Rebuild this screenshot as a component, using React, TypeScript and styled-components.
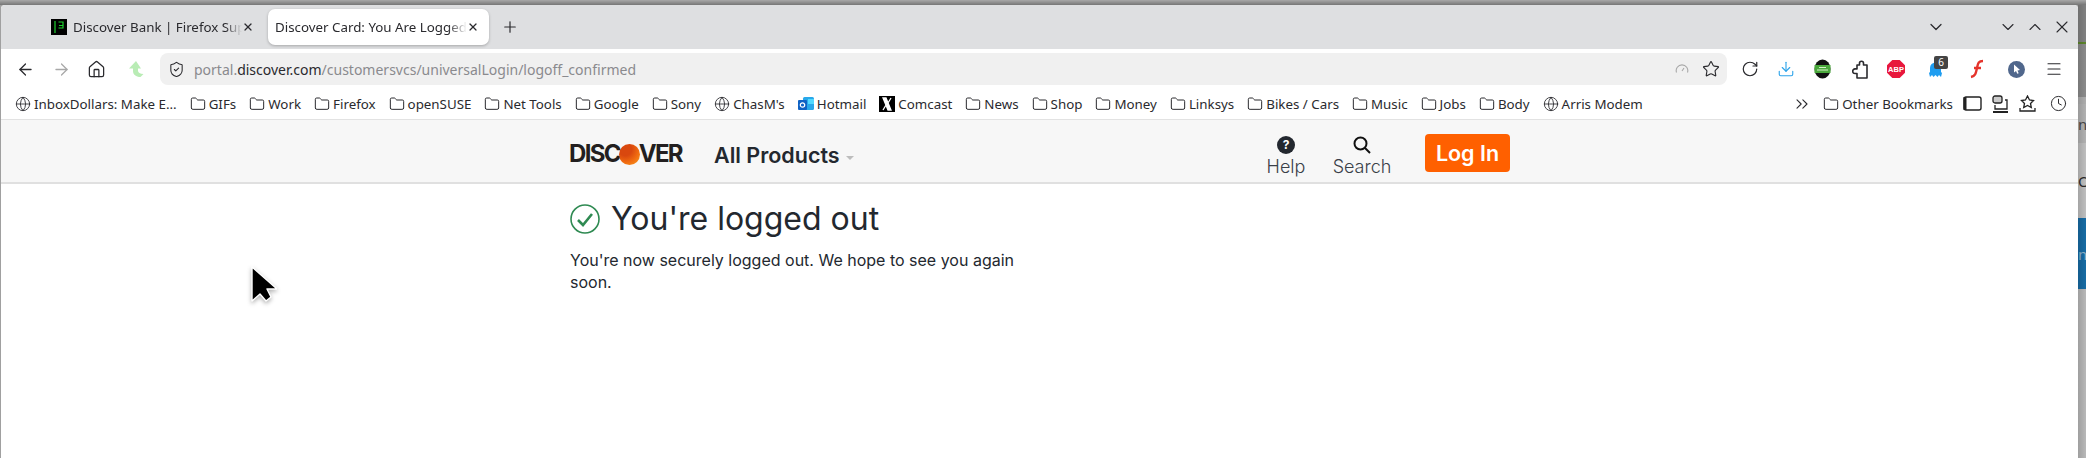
import React from 'react';
import styled, { createGlobalStyle } from 'styled-components';
import {
  ArrowLeft,
  ArrowRight,
  ChevronDown,
  ChevronUp,
  ChevronsRight,
  Clock,
  Download,
  Folder,
  Globe,
  Home,
  Menu,
  Plus,
  RotateCw,
  ShieldCheck,
  Star,
  X,
} from 'lucide-react';

const GlobalStyle = createGlobalStyle`
  html, body {
    margin: 0;
    width: 2086px;
    height: 458px;
    overflow: hidden;
    background: #a0a0a0;
    font-family: 'Noto Sans', sans-serif;
  }
`;

const Screen = styled.div`
  position: relative;
  width: 2086px;
  height: 458px;
  display: flex;
  flex-direction: column;
  overflow: hidden;
`;

const DesktopTop = styled.div`
  height: 5px;
  flex: none;
  background: linear-gradient(#a8a8a8, #767676);
`;

const Desktop = styled.div`
  flex: 1;
  display: flex;
  min-height: 0;
`;

const BrowserWindow = styled.div`
  width: 2077px;
  margin-left: 1px;
  flex: none;
  display: flex;
  flex-direction: column;
  background: #fff;
  border-top-left-radius: 4px;
  border-top-right-radius: 4px;
  overflow: hidden;
`;

const BehindStrip = styled.div`
  position: relative;
  flex: 1;
  display: flex;
  flex-direction: column;
  background: #dcdcdc;
  &::after {
    content: '';
    position: absolute;
    inset: 0;
    background: linear-gradient(to right, rgba(0, 0, 0, 0.28), rgba(0, 0, 0, 0));
  }
`;

const StripBlock = styled.div<{ $h: number; $bg: string; $color?: string }>`
  height: ${({ $h }) => $h}px;
  flex: none;
  overflow: hidden;
  display: flex;
  align-items: center;
  white-space: nowrap;
  font-size: 15px;
  color: ${({ $color }) => $color ?? '#555'};
  background: ${({ $bg }) => $bg};
`;

const TabBar = styled.div`
  height: 44px;
  flex: none;
  display: flex;
  align-items: center;
  background: #dedfe1;
  color: #2a2a2e;
  padding-left: 43px;
`;

const Tab = styled.div<{ $active?: boolean }>`
  height: 36px;
  box-sizing: border-box;
  display: flex;
  align-items: center;
  border-radius: 7px;
  padding: 0 6px 0 7px;
  background: ${({ $active }) => ($active ? '#fff' : 'transparent')};
  box-shadow: ${({ $active }) => ($active ? '0 1px 3px rgba(0,0,0,.25)' : 'none')};
  width: ${({ $active }) => ($active ? '221px' : '222px')};
  margin-right: ${({ $active }) => ($active ? '0' : '2px')};
`;

const TabTitle = styled.span<{ $w: number }>`
  width: ${({ $w }) => $w}px;
  flex: none;
  overflow: hidden;
  white-space: nowrap;
  font-size: 13.33px;
  -webkit-mask-image: linear-gradient(to right, #000 90%, transparent);
  mask-image: linear-gradient(to right, #000 90%, transparent);
`;

const Favicon = styled.svg`
  width: 16px;
  height: 16px;
  flex: none;
  margin-right: 6px;
`;

const TabClose = styled(X)`
  width: 12px;
  height: 12px;
  flex: none;
`;

const NewTab = styled.div`
  width: 42px;
  display: flex;
  justify-content: center;
  align-items: center;
`;

const TabBarSpacer = styled.div`
  flex: 1;
`;

const WindowButton = styled.div<{ $w: number }>`
  width: ${({ $w }) => $w}px;
  display: flex;
  justify-content: center;
  align-items: center;
`;

const Toolbar = styled.div`
  height: 32px;
  padding: 4px 0 0 6px;
  flex: none;
  display: flex;
  align-items: center;
  background: #fff;
  color: #2a2a2e;
`;

const ToolButton = styled.div<{ $w: number }>`
  position: relative;
  width: ${({ $w }) => $w}px;
  height: 32px;
  flex: none;
  display: flex;
  align-items: center;
  justify-content: center;
`;

const UrlBar = styled.div`
  width: 1567px;
  height: 32px;
  flex: none;
  display: flex;
  align-items: center;
  box-sizing: border-box;
  border-radius: 8px;
  background: #f0f0f0;
  padding: 0 1px 0 8px;
  margin-right: 5px;
`;

const UrlText = styled.div`
  flex: 1;
  margin-left: 9px;
  font-size: 14px;
  color: #8a8a8e;
  white-space: nowrap;
`;

const UrlDomain = styled.span`
  color: #2a2a2e;
`;

const ZoomGauge = styled.svg`
  margin-right: 7px;
`;

const Badge = styled.span`
  position: absolute;
  top: 3px;
  left: 22px;
  width: 14px;
  height: 13px;
  background: #444;
  border-radius: 2px;
  color: #fff;
  font-size: 10px;
  line-height: 13px;
  text-align: center;
`;

const BookmarksBar = styled.div`
  height: 35px;
  flex: none;
  display: flex;
  align-items: center;
  box-sizing: border-box;
  border-bottom: 1px solid #e2e2e2;
  padding: 3px 0 0 14px;
  font-size: 13.33px;
  color: #2a2a2e;
`;

const Bookmark = styled.div<{ $ml?: number; $mr?: number }>`
  display: flex;
  align-items: center;
  gap: 3px;
  margin-left: ${({ $ml }) => $ml ?? 0}px;
  margin-right: ${({ $mr }) => $mr ?? 13}px;
  white-space: nowrap;
`;

const BookmarkIcon = styled.span`
  width: 16px;
  height: 16px;
  flex: none;
  display: flex;
  align-items: center;
  justify-content: center;
`;

const SidePanelIcons = styled.div`
  display: flex;
  align-items: center;
  gap: 10px;
  padding-right: 11px;
`;

const HistoryIcon = styled(Clock)`
  margin-left: 4px;
`;

const BookmarkSpacer = styled.div`
  flex: 1;
`;

const SiteHeader = styled.header`
  height: 64px;
  flex: none;
  box-sizing: border-box;
  display: flex;
  align-items: center;
  background: #f7f7f7;
  border-bottom: 2px solid #e0e0e0;
  padding: 4px 0 0 568px;
  color: #23282f;
  font-family: Inter, sans-serif;
`;

const Logo = styled.div`
  width: 114px;
  margin-top: 2px;
  display: flex;
  align-items: center;
  font-family: Inter, sans-serif;
  font-weight: 700;
  font-size: 24px;
  letter-spacing: -1.7px;
  color: #231f20;
  line-height: 1;
`;

const LogoDot = styled.span`
  width: 21px;
  height: 21px;
  border-radius: 50%;
  margin: 0 -1px 0 -1px;
  flex: none;
  background: radial-gradient(circle at 30% 25%, #d9480f 30%, #f06a10 60%, #f9a021 100%);
`;

const AllProducts = styled.div`
  margin: 3px 0 0 31px;
  width: 543px;
  display: flex;
  align-items: center;
  font-size: 21.5px;
  font-weight: 600;
`;

const Caret = styled.span`
  width: 0;
  height: 0;
  margin: 6px 0 0 6px;
  border-left: 4px solid transparent;
  border-right: 4px solid transparent;
  border-top: 4px solid #bdbdbd;
`;

const HeaderLink = styled.div<{ $w: number }>`
  width: ${({ $w }) => $w}px;
  align-self: flex-start;
  padding-top: 12px;
  display: flex;
  flex-direction: column;
  align-items: center;
  gap: 2px;
  font-size: 18px;
  font-weight: 300;
  color: #3a4048;
  line-height: 22px;
`;

const LogInButton = styled.div`
  width: 85px;
  height: 38px;
  margin-left: 16px;
  border-radius: 4px;
  background: #ff6000;
  color: #fff;
  font-size: 21.5px;
  font-weight: 600;
  line-height: 38px;
  text-align: center;
`;

const Content = styled.main`
  flex: 1;
  padding: 20px 0 0 569px;
  font-family: Inter, sans-serif;
  color: #23282f;
  background: #fff;
`;

const Heading = styled.h1`
  margin: 0;
  display: flex;
  align-items: center;
  gap: 11px;
  font-size: 32px;
  font-weight: 400;
  line-height: 30px;
`;

const Paragraph = styled.p`
  margin: 15px 0 0;
  width: 450px;
  font-size: 16px;
  line-height: 22px;
`;

const Pointer = styled.svg`
  position: absolute;
  left: 247px;
  top: 262px;
  filter: drop-shadow(0 2px 2px rgba(0, 0, 0, 0.3));
`;

const lucideProps = { size: 19, strokeWidth: 1.6 };
const folder = <Folder size={16} strokeWidth={1.5} />;
const globe = <Globe size={16} strokeWidth={1.3} />;

const leftBookmarks: { icon: React.ReactNode; label: string }[] = [
  { icon: globe, label: 'InboxDollars: Make E...' },
  { icon: folder, label: 'GIFs' },
  { icon: folder, label: 'Work' },
  { icon: folder, label: 'Firefox' },
  { icon: folder, label: 'openSUSE' },
  { icon: folder, label: 'Net Tools' },
  { icon: folder, label: 'Google' },
  { icon: folder, label: 'Sony' },
  { icon: globe, label: "ChasM's" },
  {
    icon: (
      <svg width="16" height="16" viewBox="0 0 16 16">
        <rect x="5" y="1" width="11" height="13" rx="1.5" fill="#28a8ea" />
        <rect x="10" y="3" width="6" height="5" fill="#50d9ff" />
        <rect x="0" y="4" width="9" height="10" rx="1" fill="#0f62c4" />
        <circle cx="4.5" cy="9" r="2.2" fill="none" stroke="#fff" strokeWidth="1.2" />
      </svg>
    ),
    label: 'Hotmail',
  },
  {
    icon: (
      <svg width="16" height="16" viewBox="0 0 16 16">
        <rect width="16" height="16" fill="#000" />
        <path d="M4 2h3l5 12H9zM12 2 9 7M4 14l3-5" stroke="#fff" strokeWidth="1.3" fill="#fff" />
      </svg>
    ),
    label: 'Comcast',
  },
  { icon: folder, label: 'News' },
  { icon: folder, label: 'Shop' },
  { icon: folder, label: 'Money' },
  { icon: folder, label: 'Linksys' },
  { icon: folder, label: 'Bikes / Cars' },
  { icon: folder, label: 'Music' },
  { icon: folder, label: 'Jobs' },
  { icon: folder, label: 'Body' },
  { icon: globe, label: 'Arris Modem' },
];

const App: React.FC = () => {
  return (
    <>
      <GlobalStyle />
      <Screen>
        <DesktopTop />
        <Desktop>
          <BrowserWindow>
            <TabBar>
              <Tab>
                <Favicon viewBox="0 0 16 16">
                  <rect width="16" height="16" fill="#000" />
                  <path d="M4 2v12M7.5 3h4.5v3.5H8M12 6.5V9H7.5" stroke="#1fd12f" strokeWidth="1.2" fill="none" />
                </Favicon>
                <TabTitle $w={169}>Discover Bank | Firefox Support</TabTitle>
                <TabClose strokeWidth={2.4} />
              </Tab>
              <Tab $active>
                <TabTitle $w={192}>Discover Card: You Are Logged Out</TabTitle>
                <TabClose strokeWidth={2.4} />
              </Tab>
              <NewTab>
                <Plus size={18} strokeWidth={1.6} />
              </NewTab>
              <TabBarSpacer />
              <WindowButton $w={32}>
                <ChevronDown size={20} strokeWidth={1.5} />
              </WindowButton>
              <WindowButton $w={42} />
              <WindowButton $w={27}>
                <ChevronDown size={20} strokeWidth={1.3} />
              </WindowButton>
              <WindowButton $w={27}>
                <ChevronUp size={20} strokeWidth={1.3} />
              </WindowButton>
              <WindowButton $w={27}>
                <X size={20} strokeWidth={1.3} />
              </WindowButton>
              <WindowButton $w={3} />
            </TabBar>
            <Toolbar>
              <ToolButton $w={36}>
                <ArrowLeft {...lucideProps} />
              </ToolButton>
              <ToolButton $w={36}>
                <ArrowRight {...lucideProps} color="#a8a8a8" />
              </ToolButton>
              <ToolButton $w={34}>
                <Home {...lucideProps} />
              </ToolButton>
              <ToolButton $w={47}>
                <svg width="18" height="18" viewBox="0 0 18 18">
                  <path d="M8 1 1 8.5h4V11c0 3.5 3 6 7.5 6l3-3c-3.5 0-5.5-1.5-5.5-3.5V8.500h3z" fill="#b9ecb5" />
                </svg>
              </ToolButton>
              <UrlBar>
                <ShieldCheck size={17} strokeWidth={1.5} color="#2a2a2e" />
                <UrlText>
                  portal.<UrlDomain>discover.com</UrlDomain>/customersvcs/universalLogin/logoff_confirmed
                </UrlText>
                <ZoomGauge width="14" height="10" viewBox="0 0 14 10" fill="none" stroke="#a8a8a8" strokeWidth="1.1">
                  <path d="M1.5 8.5a5.8 5.8 0 1 1 11 0M7 7l2-3" />
                </ZoomGauge>
                <ToolButton $w={30}>
                  <Star size={18} strokeWidth={1.5} />
                </ToolButton>
              </UrlBar>
              <ToolButton $w={36}>
                <RotateCw size={18} strokeWidth={1.6} />
              </ToolButton>
              <ToolButton $w={36}>
                <Download size={18} strokeWidth={1.5} color="#2ea4ea" />
              </ToolButton>
              <ToolButton $w={36}>
                <svg width="17" height="20" viewBox="0 0 17 20">
                  <ellipse cx="8.5" cy="10" rx="8" ry="9.5" fill="#111" />
                  <rect x="0.5" y="6" width="16" height="8" fill="#4aa83c" />
                  <path d="M3 11h11M5 8.5h7" stroke="#d5f0c8" strokeWidth="1.2" />
                </svg>
              </ToolButton>
              <ToolButton $w={40}>
                <svg width="16" height="20" viewBox="0 0 16 20" fill="#fff" stroke="#2a2a2e" strokeWidth="1.6" strokeLinejoin="round">
                  <path d="M5 6h2.5V4.200a2 2 0 0 1 4 0V6H15v13H5v-4.500H3a2.300 2.300 0 0 1 0-4.600h2z" />
                </svg>
              </ToolButton>
              <ToolButton $w={32}>
                <svg width="18" height="18" viewBox="0 0 18 18">
                  <path d="M5.3 0h7.4L18 5.3v7.4L12.7 18H5.3L0 12.7V5.3z" fill="#e8173c" />
                  <text x="9" y="12" fontSize="7.5" fontWeight="700" fill="#fff" textAnchor="middle" fontFamily="'Liberation Sans', sans-serif">ABP</text>
                </svg>
              </ToolButton>
              <ToolButton $w={46}>
                <svg width="13" height="17" viewBox="0 0 13 17">
                  <path d="M1 7a5.5 5.5 0 0 1 11 0v4l1 1-1 4-2-2-1.5 2-2-2-2 2L3 14l-2 2-1-4 1-1z" fill="#1f9df0" />
                </svg>
                <Badge>6</Badge>
              </ToolButton>
              <ToolButton $w={38}>
                <svg width="14" height="20" viewBox="0 0 14 20" fill="none" stroke="#e5342c" strokeWidth="2.4">
                  <path d="M13 2C8 2 8 5 7 9s-1 8-6 9M4 9h7" />
                </svg>
              </ToolButton>
              <ToolButton $w={40}>
                <svg width="17" height="17" viewBox="0 0 17 17">
                  <circle cx="8.5" cy="8.5" r="8.5" fill="#50678c" />
                  <path d="M6 3.5 12 9l-2.5.4 1.2 2.8-1.4.6L8 10l-2 1.6z" fill="#fff" />
                </svg>
              </ToolButton>
              <ToolButton $w={36}>
                <Menu size={18} strokeWidth={1.5} />
              </ToolButton>
            </Toolbar>
            <BookmarksBar>
              {leftBookmarks.map((b) => (
                <Bookmark key={b.label}>
                  <BookmarkIcon>{b.icon}</BookmarkIcon>
                  {b.label}
                </Bookmark>
              ))}
              <BookmarkSpacer />
              <ChevronsRight size={20} strokeWidth={1.3} />
              <Bookmark $ml={11} $mr={10}>
                <BookmarkIcon>{folder}</BookmarkIcon>
                Other Bookmarks
              </Bookmark>
              <SidePanelIcons>
                <svg width="19" height="15" viewBox="0 0 19 15" fill="none" stroke="#222" strokeWidth="1.4">
                  <rect x="1" y="1" width="17" height="13" rx="2" />
                  <path d="M2 1v13" strokeWidth="3" />
                </svg>
                <svg width="17" height="18" viewBox="0 0 17 18" fill="none" stroke="#222" strokeWidth="1.3">
                  <rect x="1" y="1" width="9" height="7" rx="2" fill="#ccc" />
                  <path d="M13 5h2v9H3v-4" />
                  <path d="M1 17h15" strokeWidth="2" />
                </svg>
                <svg width="17" height="18" viewBox="0 0 17 18" fill="none" stroke="#222" strokeWidth="1.3">
                  <path d="m8.5 1 2 4 4 .5-3 3 .8 4-3.8-2-3.8 2 .8-4-3-3 4-.5z" />
                  <path d="M1 13v3h15v-3" />
                </svg>
                <HistoryIcon size={17} strokeWidth={1.4} />
              </SidePanelIcons>
            </BookmarksBar>
            <SiteHeader>
              <Logo>
                DISC
                <LogoDot />
                VER
              </Logo>
              <AllProducts>
                All Products
                <Caret />
              </AllProducts>
              <HeaderLink $w={58}>
                <svg width="18" height="18" viewBox="0 0 18 18">
                  <circle cx="9" cy="9" r="9" fill="#23282f" />
                  <text x="9" y="13" fontSize="12" fontWeight="700" fill="#fff" textAnchor="middle" fontFamily="Inter, sans-serif">?</text>
                </svg>
                Help
              </HeaderLink>
              <HeaderLink $w={94}>
                <svg width="18" height="18" viewBox="0 0 18 18" fill="none" stroke="#111" strokeWidth="2">
                  <circle cx="7.5" cy="7.5" r="6" />
                  <path d="m12 12 5 5" />
                </svg>
                Search
              </HeaderLink>
              <LogInButton>Log In</LogInButton>
            </SiteHeader>
            <Content>
              <Heading>
                <svg width="30" height="30" viewBox="0 0 30 30" fill="none" stroke="#2f8a52">
                  <circle cx="15" cy="15" r="14" strokeWidth="1.6" />
                  <path d="m8 16 5 5 9-11" strokeWidth="2.6" />
                </svg>
                You're logged out
              </Heading>
              <Paragraph>You're now securely logged out. We hope to see you again soon.</Paragraph>
            </Content>
          </BrowserWindow>
          <BehindStrip>
            <StripBlock $h={37} $bg="#9a9a9a" />
            <StripBlock $h={2} $bg="#6f9f33" />
            <StripBlock $h={53} $bg="#a6a6a6" />
            <StripBlock $h={7} $bg="#cfcfcf" />
            <StripBlock $h={39} $bg="#d4d4d4">ni</StripBlock>
            <StripBlock $h={75} $bg="#e4e4e4" $color="#333">Oc</StripBlock>
            <StripBlock $h={71} $bg="#1b80c4" $color="#a8d4f0">n</StripBlock>
          </BehindStrip>
        </Desktop>
        <Pointer width="30" height="46" viewBox="0 0 30 46">
          <path d="M5 5v34l8-7 6 7 5-4-4-8h10z" fill="#000" stroke="#fff" strokeWidth="1.4" strokeLinejoin="round" />
        </Pointer>
      </Screen>
    </>
  );
};

export default App;
